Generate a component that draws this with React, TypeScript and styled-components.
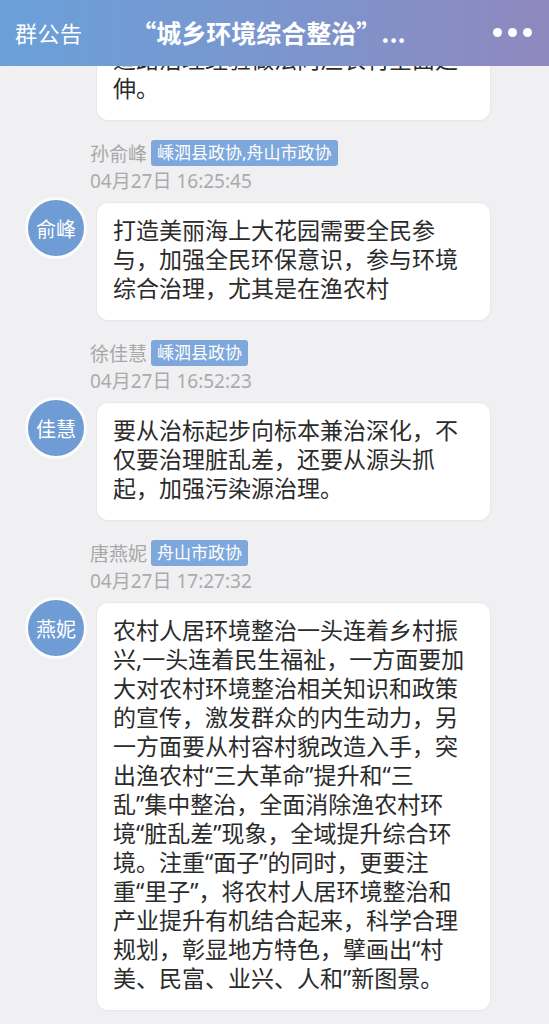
import React, { useLayoutEffect, useRef } from 'react'
import styled, { createGlobalStyle } from 'styled-components'

const GlobalStyle = createGlobalStyle`
  html, body {
    margin: 0;
    padding: 0;
    background: #f0eff1;
  }
  body {
    font-family: 'Noto Sans', 'Noto Sans CJK SC', sans-serif;
  }
`

const Screen = styled.div`
  height: 100vh;
  display: flex;
  flex-direction: column;
  background: #f0eff1;
  overflow: hidden;
`

const Header = styled.header`
  position: relative;
  z-index: 1;
  flex: none;
  height: 66px;
  box-sizing: border-box;
  padding: 0 17px 2px 15px;
  display: grid;
  grid-template-columns: 1fr auto 1fr;
  align-items: center;
  background: linear-gradient(90deg, #6aa0d9 0%, #7b96ce 50%, #8e88be 100%);
  color: #fff;
`

const BackLabel = styled.span`
  font-size: 22px;
  letter-spacing: 0.5px;
`

const Title = styled.h1`
  margin: 0 0 0 -10px;
  font-family: 'Noto Sans CJK SC', sans-serif;
  font-size: 25px;
  font-weight: 700;
  white-space: nowrap;
`

const Menu = styled.div`
  justify-self: end;
  display: flex;
  gap: 6px;
`

const Dot = styled.span`
  width: 9px;
  height: 9px;
  border-radius: 50%;
  background: #fff;
`

const Feed = styled.main`
  position: relative;
  flex: 1;
  overflow: hidden;
`

const List = styled.div`
  display: flex;
  flex-direction: column;
  gap: 20px;
  padding: 20px 0;
`

const Message = styled.section`
  display: flex;
  flex-direction: column;
`

const Meta = styled.div`
  padding-left: 90px;
  display: flex;
  flex-direction: column;
  gap: 4px;
`

const NameRow = styled.div`
  height: 26px;
  display: flex;
  align-items: center;
  gap: 4px;
`

const Name = styled.span`
  font-size: 19px;
  color: #a7a7a7;
`

const Tag = styled.span`
  padding: 0 6px;
  border-radius: 3px;
  background: #7ea7db;
  color: #fff;
  font-size: 17px;
  line-height: 26px;
`

const Time = styled.div`
  font-size: 19px;
  line-height: 22px;
  color: #ababab;
`

const Body = styled.div`
  margin-top: 5px;
  padding-left: 25px;
  display: flex;
  align-items: flex-start;
`

const Avatar = styled.div`
  flex: none;
  width: 56px;
  height: 56px;
  border: 3px solid #fbfbfc;
  border-radius: 50%;
  background: #6f9cd4;
  color: #fff;
  font-size: 20px;
  display: flex;
  align-items: center;
  justify-content: center;
`

const Bubble = styled.div`
  margin: 6px 0 0 10px;
  width: 393px;
  box-sizing: border-box;
  padding: 13px 16px 17px;
  border-radius: 11px;
  background: #fff;
  box-shadow: 0 0 0 1px #e8e8ea, 0 1px 2px rgba(0, 0, 0, 0.05);
  color: #2b2b2b;
  font-size: 23px;
  line-height: 29px;
  white-space: pre;
`

type Post = {
  name: string
  avatar: string
  org: string
  time: string
  lines: string[]
}

const posts: Post[] = [
  {
    name: '林海波',
    avatar: '海波',
    org: '嵊泗县政协',
    time: '04月27日 16:10:02',
    lines: ['推进城乡环境综合整治，要把城市', '道路治理经验做法向渔农村全面延', '伸。'],
  },
  {
    name: '孙俞峰',
    avatar: '俞峰',
    org: '嵊泗县政协,舟山市政协',
    time: '04月27日 16:25:45',
    lines: ['打造美丽海上大花园需要全民参', '与，加强全民环保意识，参与环境', '综合治理，尤其是在渔农村'],
  },
  {
    name: '徐佳慧',
    avatar: '佳慧',
    org: '嵊泗县政协',
    time: '04月27日 16:52:23',
    lines: ['要从治标起步向标本兼治深化，不', '仅要治理脏乱差，还要从源头抓', '起，加强污染源治理。'],
  },
  {
    name: '唐燕妮',
    avatar: '燕妮',
    org: '舟山市政协',
    time: '04月27日 17:27:32',
    lines: [
      '农村人居环境整治一头连着乡村振',
      '兴,一头连着民生福祉，一方面要加',
      '大对农村环境整治相关知识和政策',
      '的宣传，激发群众的内生动力，另',
      '一方面要从村容村貌改造入手，突',
      '出渔农村“三大革命”提升和“三',
      '乱”集中整治，全面消除渔农村环',
      '境“脏乱差”现象，全域提升综合环',
      '境。注重“面子”的同时，更要注',
      '重“里子”，将农村人居环境整治和',
      '产业提升有机结合起来，科学合理',
      '规划，彰显地方特色，擘画出“村',
      '美、民富、业兴、人和”新图景。',
    ],
  },
]

export default function App() {
  const feedRef = useRef<HTMLElement>(null)
  const anchorRef = useRef<HTMLElement>(null)

  // the list is read part-way: keep 孙俞峰's post 74px below the header
  useLayoutEffect(() => {
    if (feedRef.current && anchorRef.current) {
      feedRef.current.scrollTop = anchorRef.current.offsetTop - 74
    }
  }, [])

  return (
    <>
      <GlobalStyle />
      <Screen>
        <Header>
          <BackLabel>群公告</BackLabel>
          <Title>“城乡环境综合整治”...</Title>
          <Menu>
            <Dot />
            <Dot />
            <Dot />
          </Menu>
        </Header>
        <Feed ref={feedRef}>
          <List>
            {posts.map((p, i) => (
              <Message key={p.time} ref={i === 1 ? anchorRef : undefined}>
                <Meta>
                  <NameRow>
                    <Name>{p.name}</Name>
                    <Tag>{p.org}</Tag>
                  </NameRow>
                  <Time>{p.time}</Time>
                </Meta>
                <Body>
                  <Avatar>{p.avatar}</Avatar>
                  <Bubble>{p.lines.join('\n')}</Bubble>
                </Body>
              </Message>
            ))}
          </List>
        </Feed>
      </Screen>
    </>
  )
}
